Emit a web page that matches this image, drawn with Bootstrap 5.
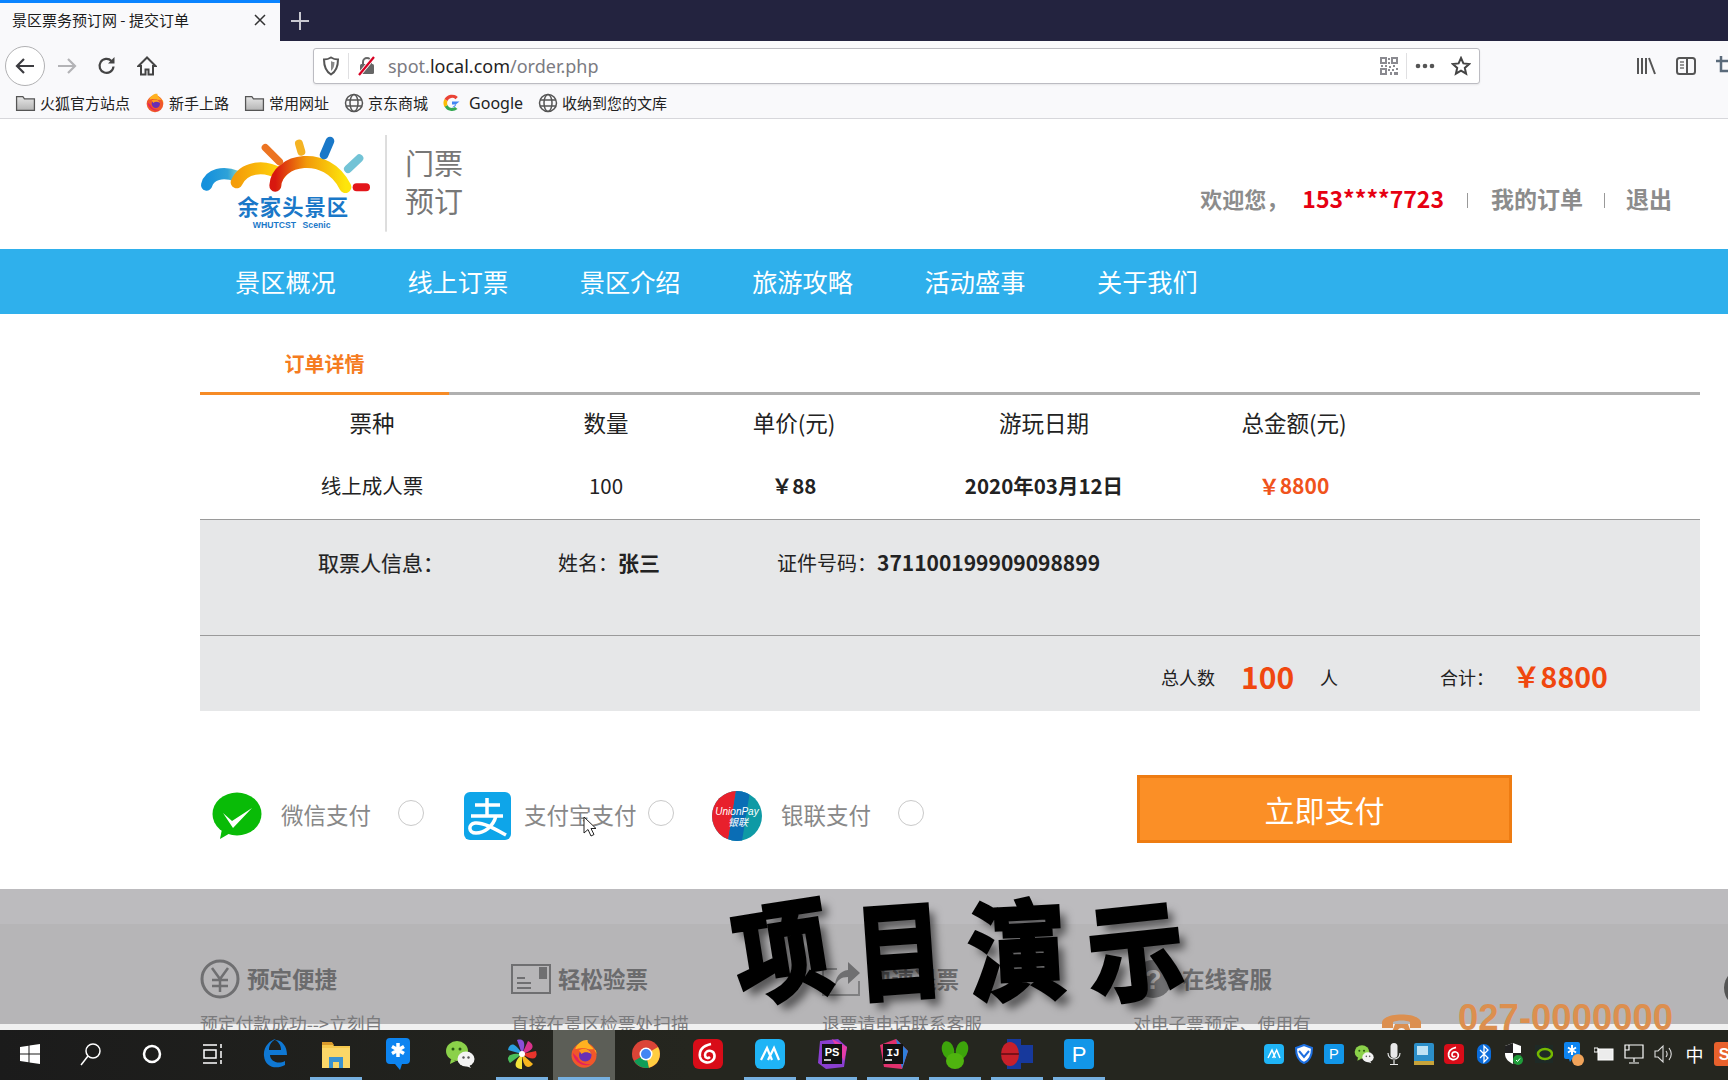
<!DOCTYPE html>
<html lang="zh-CN">
<head>
<meta charset="utf-8">
<title>景区票务预订网 - 提交订单</title>
<link href="https://cdn.jsdelivr.net/npm/bootstrap@5.3.0/dist/css/bootstrap.min.css" rel="stylesheet">
<style>
html,body{width:1728px;height:1080px;overflow:hidden;background:#fff}
body{font-family:"Noto Sans CJK SC","Liberation Sans",sans-serif;position:relative;color:#222}
svg{display:block;flex:none}
.defs-holder{width:0;height:0;overflow:hidden}
/* browser chrome */
.tabstrip{height:41px;background:#23233f}
.tab-active{width:280px;background:#f9f9fb;border-top:3px solid #0a84ff;padding:0 14px 4px 12px;font-size:15px;color:#1b1b1b}
.tab-plus{width:40px}
.toolbar{height:49px;background:#f9f9fb;padding-top:7px}
.nav-btn{flex:none;width:40px;height:36px}
.back-btn{width:40px;height:40px;margin:-2px 2px -2px 5px;border:1px solid #b1b1b3;border-radius:50%;background:#fff}
.urlbar{flex:none;width:1167px;height:36px;margin-left:146px;background:#fff;border:1px solid #bcbcc2;border-radius:3px;box-shadow:0 1px 2px rgba(0,0,0,.08);font-family:"Noto Sans","Liberation Sans",sans-serif;font-size:18px;color:#7b7b82}
.urlbar b{font-weight:400;color:#1f1f24}
.url-text{margin-left:11px;line-height:1}
.url-sep{width:1px;height:26px;background:#e0e0e2}
.tool-right{height:36px;gap:20px;margin-right:-8px}
.bookmarks{height:29px;background:#f9f9fb;border-bottom:1px solid #d7d7db;font-size:15px;color:#222;padding:0 0 3px 15px;gap:15px}
.bm-item{gap:4px;line-height:1;white-space:nowrap}
.bm-g{font-family:"Noto Sans","Liberation Sans",sans-serif;font-size:16px}
/* site header */
.site-head{height:130px;padding-left:180px}
.logo-words{margin-left:18px;margin-top:24px;font-size:29px;color:#777;line-height:38px}
.user-bar{margin-left:auto;padding:62px 56px 0 0;font-size:23px;font-weight:700;color:#8c8c8c;line-height:34px;white-space:nowrap}
.user-hello{font-size:22px}
.user-red{color:#e60012;margin:0 23px 0 14px}
.user-sep{width:1px;height:15px;background:#999;margin:12px 23px 0 0;align-self:flex-start}
.user-sep2{margin-left:21px;margin-right:21px}
/* nav */
.sitenav{height:65px;background:#2fb0ec;padding-left:235px;gap:72.4px;color:#fff;font-size:25.2px}
.sitenav a{color:#fff;text-decoration:none;width:100px;white-space:nowrap}
/* order */
.order-wrap{padding:0 28px 0 200px}
.order-title-row{height:81px;border-bottom:3px solid #b0b0b0}
.order-title{width:249px;height:81px;border-bottom:3px solid #f68b26;text-align:center;font-size:20px;font-weight:700;color:#f57c1f;padding-top:35px;line-height:30px}
.tk-table{margin:0;table-layout:fixed;width:1500px;--bs-table-bg:transparent;color:#222}
.tk-table th,.tk-table td{text-align:center;padding:0;vertical-align:middle;color:#222}
.tk-table th{font-size:22.500px;font-weight:400;height:60px;padding-bottom:4px}
.tk-table td{font-size:20.500px;height:64px;padding-bottom:3px}
.cw1{width:344px}.cw2{width:124px}.cw3{width:252px}.cw4{width:248px}.cw5{width:252px}
.tk-bold{font-weight:700}
.tk-table .tk-orange{font-weight:700;color:#f0531c;font-size:21px}
.info-block{height:116px;background:#e6e7e8;border-top:1px solid #9a9a9a;padding-top:26px;font-size:20px;line-height:32px}
.info-a{width:358px;padding-left:118px;font-size:21px;-webkit-text-stroke:.2px #222}
.info-b{width:219px}
.info-b b{font-size:21px}
.info-c b{font-size:21px}
.total-block{height:76px;background:#e6e7e8;border-top:1px solid #9a9a9a;padding:7px 0 0 961px;font-size:18px;white-space:nowrap}
.total-num{font-size:30px;font-weight:700;color:#f0470f;line-height:1;margin-top:-3px}
.tot-n1{margin:-3px 26px 0 26px}
.tot-sum{font-size:28.500px;margin-top:-1px}
.tot-lbl{margin-left:102px;margin-right:18px}
/* pay */
.pay-row{height:68px;margin-top:64px;padding-left:212px}
.pay-icon{width:50px;height:50px}
.pay-icon-ali{width:47px;height:48px}
.pay-label{margin:0 0 2px 19px;font-size:22.500px;color:#888;white-space:nowrap}
.pay-radio{width:26px;height:26px;margin:0 0 6px 27px;border:1px solid #c9c9c9;flex:none}
.pay-ali .pay-label{margin-left:13px}
.pay-ali .pay-radio{margin-left:11px}
.pay-slot1,.pay-slot2,.pay-slot3{padding-top:14px}
.pay-slot1{width:252px}.pay-slot2{width:248px}.pay-slot3{width:425px}
.pay-btn{width:375px;height:68px;border-radius:0;background:#fb8f26;border:3px solid #ee7c12;color:#fff;font-size:30px;line-height:1;padding:0}
.pay-btn:hover{background:#fb8f26;color:#fff;border-color:#ee7c12}
/* footer */
.foot{height:141px;margin-top:46px;overflow:hidden;padding:70px 0 0 200px;background:linear-gradient(#bcbbbe 0 35px,#b6b5b7 35px 135px,#f0f0f0 135px)}
.foot-col{width:311px;flex:none}
.foot-col4{width:248px;flex:none}
.foot-title{height:40px;gap:7px;font-size:22.500px;font-weight:700;color:#6b6b6d;white-space:nowrap}
.foot-sub{margin-top:12px;font-size:17.800px;line-height:24px;color:#7a7a7c;white-space:nowrap}
.foot-phone{gap:36px;margin-top:41px;font-size:36.500px;font-weight:700;color:#dc8f4f;line-height:36px;font-family:"Liberation Sans",sans-serif}
.phone-ico{margin-top:10px}
/* taskbar */
.taskbar{height:50px;overflow:hidden;background:linear-gradient(90deg,#1b1b1b,#25261f 40%)}
.tb-slot{flex:none;width:61.900px;height:50px;padding-bottom:3px;position:relative}
.tb-s{width:60.900px}
.tb-on::after{content:"";position:absolute;left:5px;right:5px;bottom:0;height:3px;background:#76b0e0}
.tb-cur{background:#5c5e57}
.tray{margin-left:149.400px;flex:none}
.tray-slot{flex:none;width:30px;height:50px;padding-bottom:3px}
.ime{font-size:18px;color:#fff;line-height:1}
/* floats */
.promo{position:absolute;left:722px;top:885px;display:flex;width:472px;font-weight:700;font-size:104px;line-height:120px;color:#000;-webkit-text-stroke:4px #000;text-shadow:7px 8px 9px rgba(0,0,0,.55);white-space:nowrap;pointer-events:none}
.promo span{display:block;flex:none;width:118px;text-align:center}
.promo .p1{transform:rotate(-9deg) scale(.92,1.04)}
.promo .p2{transform:rotate(-4deg) scale(.84,1.02)}
.promo .p3{transform:rotate(-3deg) scale(.94,1.04)}
.promo .p4{transform:rotate(-6deg) scale(.92,1.02)}
.side-ball{position:absolute;left:1724px;top:968px;width:40px;height:40px;border-radius:50%;background:#555}
.cursor-ico{position:absolute;left:583px;top:816px}
</style>
</head>
<body>
<svg class="defs-holder position-absolute" aria-hidden="true">
  <defs>
    <linearGradient id="fold" x1="0" y1="0" x2="0" y2="1"><stop offset="0" stop-color="#e6e6e6"/><stop offset="1" stop-color="#b5b5b5"/></linearGradient>
    <symbol id="i-folder" viewBox="0 0 20 20"><path d="M1.500 4.500h6l1.500 2h9.500v11h-17z" fill="url(#fold)" stroke="#555" stroke-width="1.200"/></symbol>
    <symbol id="i-globe" viewBox="0 0 20 20"><g fill="none" stroke="#555" stroke-width="1.500"><circle cx="10" cy="10" r="8.500"/><ellipse cx="10" cy="10" rx="4" ry="8.500"/><path d="M2 7h16M2 13h16"/></g></symbol>
    <symbol id="i-fx" viewBox="0 0 24 24"><circle cx="12" cy="13" r="10" fill="#f0572a"/><path d="M5 8 C7 2 13 0 15 1 C14 4 20 6 22 12 C22 6 18 9 15 8 C11 6 7 8 5 8z" fill="#ffb220"/><path d="M3 11c1 8 9 12 15 9 -4 1-10-1-11-5z" fill="#e4215e"/><circle cx="13" cy="13" r="5" fill="#6a2fb5"/><path d="M8 9c3-2 8-2 10 3-3-2-6-2-8 0z" fill="#ff9b1f"/></symbol>
    <symbol id="i-wechat2" viewBox="0 0 30 30"><ellipse cx="12" cy="12" rx="11" ry="10" fill="#8bd14a"/><path d="M6 20l-1 5 6-3z" fill="#8bd14a"/><circle cx="8" cy="10" r="1.500" fill="#2a5a14"/><circle cx="15" cy="10" r="1.500" fill="#2a5a14"/><ellipse cx="21" cy="20" rx="8.500" ry="7.500" fill="#f3f3f3"/><path d="M24 26l2 3-5-2z" fill="#f3f3f3"/><circle cx="18.500" cy="18.500" r="1.200" fill="#555"/><circle cx="23.500" cy="18.500" r="1.200" fill="#555"/></symbol>
    <symbol id="i-mango" viewBox="0 0 30 30"><rect x="0" y="0" width="30" height="30" rx="6" fill="#1fb4f6"/><path d="M6 21L12 9l5 12M13 21l6-12 5 12" fill="none" stroke="#fff" stroke-width="2.200"/></symbol>
    <symbol id="i-netease" viewBox="0 0 30 30"><rect width="30" height="30" rx="6" fill="#d80c18"/><g fill="none" stroke="#fff" stroke-width="2.600"><path d="M18 5C9 7 6 12 7 18c1 5 8 7 12 4 4-3 3-9-1-10-3-1-6 1-6 4s3 4 5 2"/></g></symbol>
    <symbol id="i-p" viewBox="0 0 30 30"><rect width="30" height="30" rx="4" fill="#1296e8"/><text x="15" y="23" text-anchor="middle" font-family="Liberation Sans, sans-serif" font-size="22" fill="#fff">P</text></symbol>
  </defs>
</svg>

<!-- browser tabs -->
<div class="tabstrip d-flex">
  <div class="tab-active d-flex align-items-center justify-content-between"><span>景区票务预订网 - 提交订单</span>
    <svg width="12" height="12" viewBox="0 0 12 12"><path d="M1 1l10 10M11 1L1 11" stroke="#333" stroke-width="1.500"/></svg></div>
  <div class="tab-plus d-flex align-items-center justify-content-center"><svg width="18" height="18" viewBox="0 0 18 18"><path d="M9 0v18M0 9h18" stroke="#c8c8d0" stroke-width="2"/></svg></div>
</div>

<!-- toolbar -->
<div class="toolbar d-flex">
  <div class="d-flex">
    <div class="back-btn d-flex align-items-center justify-content-center"><svg width="22" height="22" viewBox="0 0 22 22"><path d="M20 11H3M10 4l-7 7 7 7" fill="none" stroke="#3c3c40" stroke-width="2.200"/></svg></div>
    <div class="nav-btn d-flex align-items-center justify-content-center"><svg width="22" height="22" viewBox="0 0 22 22"><path d="M2 11h17M12 4l7 7-7 7" fill="none" stroke="#b3b3b6" stroke-width="2.200"/></svg></div>
    <div class="nav-btn d-flex align-items-center justify-content-center"><svg width="20" height="20" viewBox="0 0 20 20"><path d="M16.500 10.500a7 7 0 1 1-2-5.500" fill="none" stroke="#444" stroke-width="2.200"/><path d="M17.500 1v6.500H11z" fill="#444"/></svg></div>
    <div class="nav-btn d-flex align-items-center justify-content-center"><svg width="20" height="20" viewBox="0 0 20 20"><path d="M10 1.500L1.500 10H4v8.500h4.500v-5h3v5H16V10h2.500z" fill="none" stroke="#444" stroke-width="2"/></svg></div>
  </div>
  <div class="urlbar d-flex align-items-center">
    <svg class="ms-2" width="18" height="20" viewBox="0 0 18 20"><path d="M9 1.500c2 1.300 4.500 2 7 2 0 7-2 12-7 15-5-3-7-8-7-15 2.500 0 5-.7 7-2z" fill="none" stroke="#555" stroke-width="2"/><path d="M9 5c1 .6 2 1 3.500 1 0 4-1 7-3.500 9z" fill="#888"/></svg>
    <span class="url-sep ms-2"></span>
    <svg class="ms-2" width="20" height="20" viewBox="0 0 20 20"><rect x="3" y="8" width="14" height="10" rx="1.500" fill="#666"/><path d="M6 8V6a4 4 0 0 1 8 0v2" fill="none" stroke="#666" stroke-width="2"/><path d="M2 19L17 1" stroke="#fff" stroke-width="4"/><path d="M2 19L17 1" stroke="#d70022" stroke-width="2.200"/></svg>
    <span class="url-text"><span>spot.</span><b>local.com</b><span>/order.php</span></span>
    <div class="ms-auto d-flex align-items-center">
      <svg width="18" height="18" viewBox="0 0 18 18"><g fill="#8a8a90"><path fill-rule="evenodd" d="M0 0h7v7H0zM2 2v3h3V2zM11 0h7v7h-7zM13 2v3h3V2zM0 11h7v7H0zM2 13v3h3v-3z"/><path d="M8 1h2v2H8zM8 5h2v2H8zM1 8h2v2H1zM5 8h2v2H5zM9 9h2v2H9zM13 8h2v2h-2zM8 12h2v2H8zM12 12h2v2h-2zM16 11h2v2h-2zM10 15h2v3h-2zM14 15h4v3h-4z"/></g></svg>
      <span class="url-sep ms-2"></span>
      <svg class="ms-2" width="20" height="6" viewBox="0 0 20 6"><g fill="#555"><circle cx="3" cy="3" r="2.300"/><circle cx="10" cy="3" r="2.300"/><circle cx="17" cy="3" r="2.300"/></g></svg>
      <svg class="ms-3 me-2" width="20" height="20" viewBox="0 0 20 20"><path d="M10 2l2.400 5.400 5.800.6-4.400 3.900 1.300 5.800L10 14.700l-5.100 3 1.300-5.800L1.800 8l5.800-.6z" fill="none" stroke="#444" stroke-width="2"/></svg>
    </div>
  </div>
  <div class="tool-right d-flex align-items-center ms-auto">
    <svg width="20" height="18" viewBox="0 0 20 18"><path d="M2 1v16M6 1v16M10 1v16M13 1l6 16" fill="none" stroke="#555" stroke-width="2"/></svg>
    <svg width="20" height="18" viewBox="0 0 20 18"><rect x="1" y="1" width="18" height="16" rx="2.500" fill="none" stroke="#555" stroke-width="2"/><path d="M11 1v16" stroke="#555" stroke-width="2"/><path d="M4 5h4M4 8h4M4 11h4" stroke="#777" stroke-width="1.500"/></svg>
    <svg width="20" height="20" viewBox="0 0 20 20"><path d="M5 0v15h15M0 5h15v15" fill="none" stroke="#5a6a7a" stroke-width="2.500"/></svg>
  </div>
</div>

<!-- bookmarks -->
<div class="bookmarks d-flex align-items-center">
  <div class="d-flex align-items-center bm-item"><svg width="21" height="21"><use href="#i-folder"/></svg><span>火狐官方站点</span></div>
  <div class="d-flex align-items-center bm-item"><svg width="20" height="20"><use href="#i-fx"/></svg><span>新手上路</span></div>
  <div class="d-flex align-items-center bm-item"><svg width="21" height="21"><use href="#i-folder"/></svg><span>常用网址</span></div>
  <div class="d-flex align-items-center bm-item"><svg width="20" height="20"><use href="#i-globe"/></svg><span>京东商城</span></div>
  <div class="d-flex align-items-center bm-item"><svg width="18" height="18" viewBox="0 0 18 18"><path d="M16.500 7.500H9v3h4.300A4.500 4.500 0 0 1 9 13.500" fill="#4285f4"/><path d="M4.500 11A5 5 0 0 0 9 14a5 5 0 0 0 3-1l2.500 2a8.500 8.500 0 0 1-13-2.500z" fill="#34a853"/><path d="M1.500 5A8.500 8.500 0 0 0 1.500 13L4.500 11a5 5 0 0 1 0-4z" fill="#fbbc05"/><path d="M1.500 5A8.500 8.500 0 0 1 14.800 3L12.500 5.200A5 5 0 0 0 4.500 7z" fill="#ea4335"/></svg><span class="bm-g ms-1">Google</span></div>
  <div class="d-flex align-items-center bm-item"><svg width="20" height="20"><use href="#i-globe"/></svg><span>收纳到您的文库</span></div>
</div>

<!-- site header -->
<header class="site-head d-flex">
  <svg width="207" height="120" viewBox="0 0 621 360">
    <defs>
      <linearGradient id="lg1" x1="0" x2="1" y1="0" y2="0"><stop offset="0" stop-color="#d8180f"/><stop offset=".45" stop-color="#f29a0a"/><stop offset="1" stop-color="#fde50c"/></linearGradient>
      <linearGradient id="lg2" x1="0" x2="1" y1="0" y2="0"><stop offset="0" stop-color="#f49d0a"/><stop offset="1" stop-color="#ffd40a"/></linearGradient>
      <linearGradient id="lg3" x1="0" x2="1" y1="0" y2="0"><stop offset="0" stop-color="#1691dc"/><stop offset=".7" stop-color="#2ea2d8"/><stop offset="1" stop-color="#76c8c8"/></linearGradient>
    </defs>
    <path d="M80 198C88 165 130 155 170 172" fill="none" stroke="url(#lg3)" stroke-width="34" stroke-linecap="round"/>
    <path d="M170 190C190 145 250 135 300 165" fill="none" stroke="url(#lg2)" stroke-width="36" stroke-linecap="round"/>
    <path d="M286 200C290 120 440 90 496 204" fill="none" stroke="url(#lg1)" stroke-width="36" stroke-linecap="round"/>
    <path d="M256 86L298 128" stroke="#ec7422" stroke-width="22" stroke-linecap="round"/>
    <path d="M357 74L364 98" stroke="#f4b323" stroke-width="24" stroke-linecap="round"/>
    <path d="M450 66L432 108" stroke="#1a78c8" stroke-width="26" stroke-linecap="round"/>
    <path d="M538 118L504 150" stroke="#72c3d6" stroke-width="24" stroke-linecap="round"/>
    <path d="M530 205H558" stroke="#e3161a" stroke-width="24" stroke-linecap="round"/>
    <text x="340" y="288" text-anchor="middle" font-family="Noto Sans CJK SC, sans-serif" font-weight="700" font-size="64" fill="#1a78c8" letter-spacing="3">余家头景区</text>
    <text x="335" y="326" text-anchor="middle" font-family="Liberation Sans, sans-serif" font-weight="700" font-size="26" fill="#1a78c8" word-spacing="12">WHUTCST Scenic</text>
    <path d="M618 48V338" stroke="#9a9a9a" stroke-width="2"/>
  </svg>
  <div class="logo-words"><div>门票</div><div>预订</div></div>
  <div class="user-bar d-flex">
    <span class="user-hello">欢迎您，</span><span class="user-red">153****7723</span><span class="user-sep"></span><span>我的订单</span><span class="user-sep user-sep2"></span><span>退出</span>
  </div>
</header>

<!-- nav -->
<nav class="sitenav d-flex align-items-center">
  <a href="#">景区概况</a><a href="#">线上订票</a><a href="#">景区介绍</a><a href="#">旅游攻略</a><a href="#">活动盛事</a><a href="#">关于我们</a>
</nav>

<!-- order -->
<main class="order-wrap">
  <div class="order-title-row"><div class="order-title">订单详情</div></div>
  <table class="table table-borderless tk-table">
    <thead><tr><th class="cw1">票种</th><th class="cw2">数量</th><th class="cw3">单价(元)</th><th class="cw4">游玩日期</th><th class="cw5">总金额(元)</th><th></th></tr></thead>
    <tbody><tr><td>线上成人票</td><td>100</td><td class="tk-bold">￥88</td><td class="tk-bold">2020年03月12日</td><td class="tk-orange">￥8800</td><td></td></tr></tbody>
  </table>
  <div class="info-block d-flex">
    <div class="info-a">取票人信息：</div>
    <div class="info-b">姓名：<b>张三</b></div>
    <div class="info-c">证件号码：<b>371100199909098899</b></div>
  </div>
  <div class="total-block d-flex align-items-center">
    <span>总人数</span><span class="total-num tot-n1">100</span><span>人</span>
    <span class="tot-lbl">合计：</span><span class="total-num tot-sum">￥8800</span>
  </div>
</main>

<!-- pay -->
<section class="pay-row d-flex align-items-center">
  <div class="pay-slot1 d-flex align-items-center">
    <svg class="pay-icon" viewBox="0 0 50 50"><ellipse cx="25" cy="23" rx="24.500" ry="21.500" fill="#09bb07"/><path d="M10 38l-2 10 12-7z" fill="#09bb07"/><path d="M11 22l9 8 20-13-19 20z" fill="#fff"/></svg>
    <label class="pay-label form-check-label">微信支付</label>
    <input class="form-check-input pay-radio" type="radio" name="pay" aria-label="微信支付">
  </div>
  <div class="pay-slot2 pay-ali d-flex align-items-center">
    <svg class="pay-icon-ali" viewBox="0 0 47 48"><rect width="47" height="48" rx="6" fill="#0ea5e9"/><path d="M11 13h25M23 6v18M7 24h32M32 24C29 35 20 41 12 41 4 41 4 32 11 31c8-1 20 6 31 12" fill="none" stroke="#fff" stroke-width="3.500"/></svg>
    <label class="pay-label form-check-label">支付宝支付</label>
    <input class="form-check-input pay-radio" type="radio" name="pay" aria-label="支付宝支付">
  </div>
  <div class="pay-slot3 d-flex align-items-center">
    <svg class="pay-icon" viewBox="0 0 50 50"><defs><clipPath id="upc"><circle cx="25" cy="25" r="25"/></clipPath></defs><g clip-path="url(#upc)"><rect width="50" height="50" fill="#0e9aa5"/><path d="M0 0H24L16 50H0z" fill="#e8202c"/><path d="M24 0H38L30 50H16z" fill="#0a6db5"/></g><text x="25" y="24" text-anchor="middle" font-family="Liberation Sans, sans-serif" font-style="italic" font-size="10" fill="#fff">UnionPay</text><text x="26" y="35" text-anchor="middle" font-family="Noto Sans CJK SC, sans-serif" font-style="italic" font-size="10" fill="#fff">银联</text></svg>
    <label class="pay-label form-check-label">银联支付</label>
    <input class="form-check-input pay-radio" type="radio" name="pay" aria-label="银联支付">
  </div>
  <button class="btn pay-btn" type="button">立即支付</button>
</section>

<!-- footer -->
<footer class="foot d-flex">
  <div class="foot-col">
    <div class="foot-title d-flex align-items-center"><svg width="40" height="40" viewBox="0 0 40 40"><circle cx="20" cy="20" r="18" fill="none" stroke="#6f6f71" stroke-width="3"/><path d="M12 9l8 11 8-11M20 20v13M12 21h16M12 27h16" fill="none" stroke="#6f6f71" stroke-width="2.500"/></svg><span>预定便捷</span></div>
    <div class="foot-sub">预定付款成功--&gt;立刻自</div>
  </div>
  <div class="foot-col">
    <div class="foot-title d-flex align-items-center"><svg width="40" height="30" viewBox="0 0 40 30"><rect x="1" y="1" width="38" height="28" fill="none" stroke="#6f6f71" stroke-width="2"/><rect x="28" y="3" width="8" height="12" fill="#6f6f71"/><path d="M6 14h8M6 19h14M6 24h14" stroke="#6f6f71" stroke-width="2"/></svg><span>轻松验票</span></div>
    <div class="foot-sub">直接在景区检票处扫描</div>
  </div>
  <div class="foot-col">
    <div class="foot-title d-flex align-items-center"><svg width="40" height="36" viewBox="0 0 40 36"><path d="M1 8h14M1 8v26h36V20" fill="none" stroke="#808082" stroke-width="2"/><path d="M26 1l12 11-12 11v-7c-7 0-11 3-13 10 0-10 5-16 13-17z" fill="#6f6f71"/></svg><span>快速退票</span></div>
    <div class="foot-sub">退票请电话联系客服</div>
  </div>
  <div class="foot-col4">
    <div class="foot-title d-flex align-items-center"><svg width="42" height="40" viewBox="0 0 42 40"><circle cx="20" cy="20" r="19" fill="#6f6f71"/><text x="20" y="30" text-anchor="middle" font-family="Liberation Sans, sans-serif" font-weight="700" font-size="28" fill="#b6b5b7">?</text></svg><span>在线客服</span></div>
    <div class="foot-sub">对电子票预定、使用有</div>
  </div>
  <div class="foot-phone d-flex align-items-start">
    <svg class="phone-ico" width="41" height="30" viewBox="0 0 41 30"><path d="M1 12C3 2 38 2 40 12v6H29v-6c-4-2-13-2-17 0v6H1z" fill="#dc8f4f"/><path d="M14 14h13l6 16H8z" fill="#dc8f4f"/><circle cx="20.500" cy="22" r="4" fill="#f0f0f0"/></svg>
    <span>027-0000000</span>
  </div>
</footer>

<!-- taskbar -->
<div class="taskbar d-flex position-relative">
  <div class="tb-slot tb-s d-flex align-items-center justify-content-center"><svg width="20" height="20" viewBox="0 0 20 20"><path d="M0 3l8.500-1.300V9.500H0zM9.500 1.500L20 0v9.500H9.500zM0 10.500h8.500v7.800L0 17zM9.500 10.500H20V20L9.500 18.500z" fill="#fff"/></svg></div>
  <div class="tb-slot tb-s d-flex align-items-center justify-content-center"><svg width="22" height="24" viewBox="0 0 22 24"><circle cx="13" cy="9" r="7" fill="none" stroke="#fff" stroke-width="1.500"/><path d="M8 14L1 23" stroke="#fff" stroke-width="1.500"/></svg></div>
  <div class="tb-slot tb-s d-flex align-items-center justify-content-center"><svg width="20" height="20" viewBox="0 0 20 20"><circle cx="10" cy="10" r="8" fill="none" stroke="#fff" stroke-width="2.500"/></svg></div>
  <div class="tb-slot tb-s d-flex align-items-center justify-content-center"><svg width="20" height="20" viewBox="0 0 20 20"><path d="M0 1h14M0 19h14M1 6h12v8H1z" fill="none" stroke="#fff" stroke-width="1.500"/><path d="M18 0v4M18 7v7M18 16v4" stroke="#fff" stroke-width="1.500"/></svg></div>
  <div class="tb-slot d-flex align-items-center justify-content-center"><svg width="26" height="30" viewBox="0 0 26 30"><path d="M23 26C14 31 3 28 2 17 1 8 8 1 14 0 8 3 7 8 7 11h12c0-4-2-8-6-10 7 0 12 6 12 15H8c0 6 8 10 15 6z" fill="#0f78d4"/></svg></div>
  <div class="tb-slot tb-on d-flex align-items-center justify-content-center"><svg width="28" height="28" viewBox="0 0 28 28"><path d="M0 3h10l2 3h16v22H0z" fill="#f5c84c"/><path d="M0 2h10l2 3H0z" fill="#d99a2b"/><rect x="0" y="8" width="28" height="20" fill="#fbd768"/><path d="M7 28V17h14v11h-4v-6h-6v6z" fill="#3b93d0"/></svg></div>
  <div class="tb-slot d-flex align-items-center justify-content-center"><svg width="24" height="32" viewBox="0 0 24 32"><path d="M4 0h16a4 4 0 0 1 4 4v18a4 4 0 0 1-4 4h-4l-2 6-5-6H4a4 4 0 0 1-4-4V4a4 4 0 0 1 4-4z" fill="#0d84f0"/><path d="M12 5v14M6 8.500l12 7M18 8.500l-12 7" stroke="#fff" stroke-width="3.500"/></svg></div>
  <div class="tb-slot d-flex align-items-center justify-content-center"><svg width="30" height="30"><use href="#i-wechat2"/></svg></div>
  <div class="tb-slot tb-on d-flex align-items-center justify-content-center"><svg width="30" height="30" viewBox="0 0 30 30"><path d="M15 15L10 1c6-2 10 2 5 14z" fill="#8b4fd8"/><path d="M15 15L21 2c6 3 8 9-6 13z" fill="#d8338c"/><path d="M15 15L29 12c2 6-1 12-14 3z" fill="#e8342c"/><path d="M15 15L26 25c-4 5-10 5-11-10z" fill="#f6b51e"/><path d="M15 15L15 30c-7 0-10-5 0-15z" fill="#f3e33a"/><path d="M15 15L3 24c-4-5-3-10 12-9z" fill="#4bbf5a"/><path d="M15 15L1 11c1-6 6-10 14 4z" fill="#2a9fe0"/><circle cx="15" cy="15" r="3" fill="#fff"/></svg></div>
  <div class="tb-slot tb-on tb-cur d-flex align-items-center justify-content-center"><svg width="30" height="30"><use href="#i-fx"/></svg></div>
  <div class="tb-slot d-flex align-items-center justify-content-center"><svg width="28" height="28" viewBox="0 0 28 28"><circle cx="14" cy="14" r="14" fill="#db4437"/><path d="M14 14L2 21A14 14 0 0 0 17 27.700z" fill="#0f9d58"/><path d="M14 14L26 7A14 14 0 0 1 17 27.700z" fill="#ffcd40"/><circle cx="14" cy="14" r="6.500" fill="#fff"/><circle cx="14" cy="14" r="5" fill="#4285f4"/></svg></div>
  <div class="tb-slot d-flex align-items-center justify-content-center"><svg width="30" height="30"><use href="#i-netease"/></svg></div>
  <div class="tb-slot tb-on d-flex align-items-center justify-content-center"><svg width="30" height="30"><use href="#i-mango"/></svg></div>
  <div class="tb-slot tb-on d-flex align-items-center justify-content-center"><svg width="30" height="30" viewBox="0 0 30 30"><path d="M3 2l18-2 9 8-3 20-18 2-8-6z" fill="#8a3fd0"/><path d="M15 0l15 8-3 14z" fill="#e63da8"/><rect x="5" y="5" width="20" height="20" fill="#111"/><text x="15" y="17" text-anchor="middle" font-family="Liberation Sans, sans-serif" font-weight="700" font-size="11" fill="#fff">PS</text><path d="M7 21h7" stroke="#fff" stroke-width="1.500"/></svg></div>
  <div class="tb-slot tb-on d-flex align-items-center justify-content-center"><svg width="30" height="30" viewBox="0 0 30 30"><path d="M2 6l16-6 12 12-6 18L6 28z" fill="#e0316d"/><path d="M18 0l12 12-6 18z" fill="#2f7fdc"/><rect x="5" y="5" width="20" height="20" fill="#111"/><text x="15" y="17" text-anchor="middle" font-family="Liberation Mono, monospace" font-weight="700" font-size="11" fill="#fff">IJ</text><path d="M7 21h7" stroke="#fff" stroke-width="1.500"/></svg></div>
  <div class="tb-slot tb-on d-flex align-items-center justify-content-center"><svg width="28" height="30" viewBox="0 0 28 30"><ellipse cx="7" cy="11" rx="6" ry="9" fill="#3da50b" transform="rotate(-15 7 11)"/><ellipse cx="21" cy="11" rx="6" ry="9" fill="#3da50b" transform="rotate(15 21 11)"/><ellipse cx="14" cy="22" rx="9" ry="8" fill="#4fb40f"/></svg></div>
  <div class="tb-slot tb-on d-flex align-items-center justify-content-center"><svg width="32" height="30" viewBox="0 0 32 30"><path d="M6 0h14v6h12v18H20v6H6z" fill="#17399c"/><ellipse cx="9" cy="15" rx="9" ry="12" fill="#c8202a"/><path d="M0 15h18" stroke="#7a1018" stroke-width="2"/></svg></div>
  <div class="tb-slot tb-on d-flex align-items-center justify-content-center"><svg width="30" height="30"><use href="#i-p"/></svg></div>
  <div class="tray d-flex">
    <div class="tray-slot d-flex align-items-center justify-content-center"><svg width="20" height="20"><use href="#i-mango"/></svg></div>
    <div class="tray-slot d-flex align-items-center justify-content-center"><svg width="18" height="20" viewBox="0 0 18 20"><path d="M9 1l8 3c0 8-3 13-8 15-5-2-8-7-8-15z" fill="#fff" stroke="#1d6fe0" stroke-width="2"/><path d="M4 7l5 6 5-6" fill="none" stroke="#1d6fe0" stroke-width="2"/></svg></div>
    <div class="tray-slot d-flex align-items-center justify-content-center"><svg width="20" height="20"><use href="#i-p"/></svg></div>
    <div class="tray-slot d-flex align-items-center justify-content-center"><svg width="20" height="20"><use href="#i-wechat2"/></svg></div>
    <div class="tray-slot d-flex align-items-center justify-content-center"><svg width="14" height="22" viewBox="0 0 14 22"><rect x="3.500" y="0" width="7" height="15" rx="3.500" fill="#e8e8e8"/><path d="M1 10c0 8 12 8 12 0M7 17v4M3 21.500h8" fill="none" stroke="#e8e8e8" stroke-width="1.200"/></svg></div>
    <div class="tray-slot d-flex align-items-center justify-content-center"><svg width="20" height="22" viewBox="0 0 20 22"><rect width="20" height="22" rx="2" fill="#2c8fc9"/><rect x="3" y="3" width="11" height="9" fill="#bfe3f5"/><rect x="0" y="18" width="20" height="4" fill="#c7a33a"/></svg></div>
    <div class="tray-slot d-flex align-items-center justify-content-center"><svg width="20" height="20"><use href="#i-netease"/></svg></div>
    <div class="tray-slot d-flex align-items-center justify-content-center"><svg width="14" height="20" viewBox="0 0 14 20"><rect width="14" height="20" rx="7" fill="#0a6cdb"/><path d="M3 6l8 8-4 4V2l4 4-8 8" fill="none" stroke="#fff" stroke-width="1.300"/></svg></div>
    <div class="tray-slot d-flex align-items-center justify-content-center"><svg width="20" height="24" viewBox="0 0 20 24"><path d="M9 1l8 3v8c0 5-4 8-8 10-4-2-8-5-8-10V4z" fill="#fff"/><path d="M9 1v10H1V4zM9 11h8v1c0 5-4 8-8 10z" fill="#222"/><circle cx="14" cy="18" r="5" fill="#1f9d3a"/><path d="M12 18l1.500 1.500 2.500-3" fill="none" stroke="#fff"/></svg></div>
    <div class="tray-slot d-flex align-items-center justify-content-center"><svg width="18" height="18" viewBox="0 0 18 18"><rect width="18" height="18" fill="#1e2a26"/><ellipse cx="10" cy="9" rx="7" ry="5" fill="none" stroke="#76b900" stroke-width="2.500"/></svg></div>
    <div class="tray-slot d-flex align-items-center justify-content-center"><svg width="20" height="24" viewBox="0 0 20 24"><path d="M2 0h12a2 2 0 0 1 2 2v13a2 2 0 0 1-2 2H8l-2 3-1-3H2a2 2 0 0 1-2-2V2a2 2 0 0 1 2-2z" fill="#0d84f0"/><path d="M8 3v10M4 5.500l8 5M12 5.500l-8 5" stroke="#fff" stroke-width="2"/><circle cx="14" cy="18" r="6" fill="#f0a35a"/></svg></div>
    <div class="tray-slot d-flex align-items-center justify-content-center"><svg width="20" height="14" viewBox="0 0 20 14"><rect x="4" y="2" width="15" height="11" fill="#ececec" stroke="#fff"/><path d="M0 1h4v4H0z" fill="none" stroke="#fff"/></svg></div>
    <div class="tray-slot d-flex align-items-center justify-content-center"><svg width="20" height="20" viewBox="0 0 20 20"><path d="M1 1h18v13H1zM10 14v4M5 19h10M1 1h4v5H1z" fill="none" stroke="#fff" stroke-width="1.200"/></svg></div>
    <div class="tray-slot d-flex align-items-center justify-content-center"><svg width="20" height="20" viewBox="0 0 20 20"><path d="M1 7h3l5-5v16l-5-5H1zM12 7c1.500 2 1.500 4 0 6M15 4c3 4 3 8 0 12" fill="none" stroke="#ddd" stroke-width="1.100"/></svg></div>
    <div class="tray-slot d-flex align-items-center justify-content-center ime">中</div>
    <div class="tray-slot d-flex align-items-center justify-content-center"><svg width="20" height="24" viewBox="0 0 20 24"><rect width="20" height="24" rx="3" fill="#e8612c"/><text x="10" y="18" text-anchor="middle" font-family="Liberation Sans, sans-serif" font-weight="700" font-size="16" fill="#fff">S</text></svg></div>
  </div>
</div>

<!-- overlays -->
<div class="promo"><span class="p1">项</span><span class="p2">目</span><span class="p3">演</span><span class="p4">示</span></div>
<div class="side-ball"></div>
<svg class="cursor-ico" width="14" height="22" viewBox="0 0 14 22"><path d="M1 1v16l4-3.500L8 20l3-1.500-3-6h5z" fill="#fff" stroke="#222" stroke-width="1"/></svg>
<script src="https://cdn.jsdelivr.net/npm/bootstrap@5.3.0/dist/js/bootstrap.bundle.min.js"></script>
</body>
</html>
